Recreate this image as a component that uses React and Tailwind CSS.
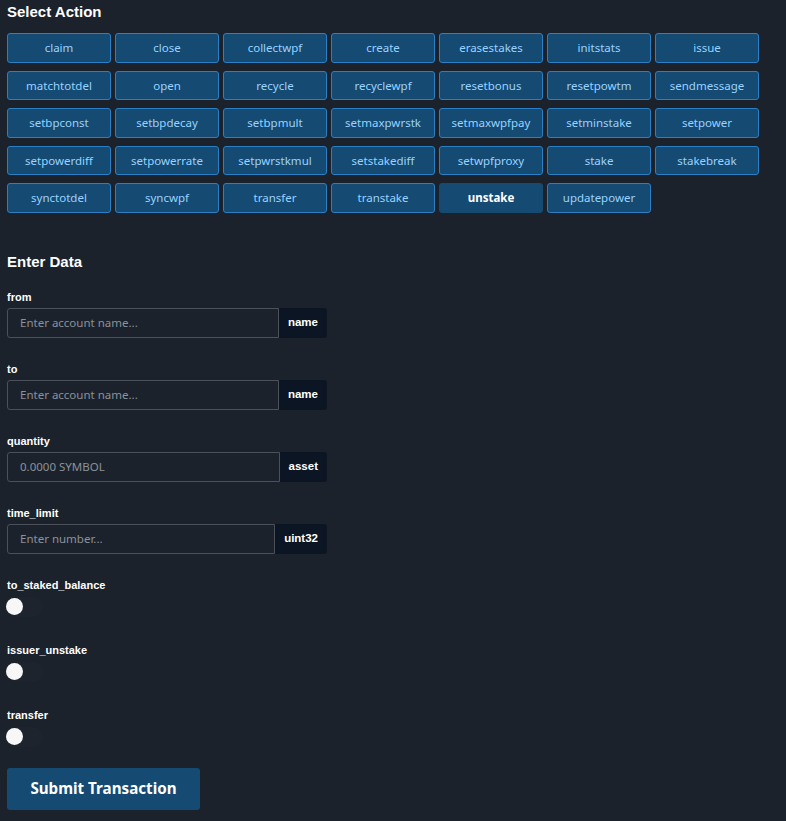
import { useState } from 'react';

const actions = [
  'claim', 'close', 'collectwpf', 'create', 'erasestakes', 'initstats', 'issue',
  'matchtotdel', 'open', 'recycle', 'recyclewpf', 'resetbonus', 'resetpowtm', 'sendmessage',
  'setbpconst', 'setbpdecay', 'setbpmult', 'setmaxpwrstk', 'setmaxwpfpay', 'setminstake', 'setpower',
  'setpowerdiff', 'setpowerrate', 'setpwrstkmul', 'setstakediff', 'setwpfproxy', 'stake', 'stakebreak',
  'synctotdel', 'syncwpf', 'transfer', 'transtake', 'unstake', 'updatepower',
];

const fields = [
  { name: 'from', type: 'name', placeholder: 'Enter account name...' },
  { name: 'to', type: 'name', placeholder: 'Enter account name...' },
  { name: 'quantity', type: 'asset', placeholder: '0.0000 SYMBOL' },
  { name: 'time_limit', type: 'uint32', placeholder: 'Enter number...' },
];

const toggles = ['to_staked_balance', 'issuer_unstake', 'transfer'];

const Toggle = ({ on, onClick }) => (
  <button
    onClick={onClick}
    className="relative block w-[36px] h-[20px] rounded-full bg-[#1d242d]"
  >
    <span
      className={`absolute top-[1px] w-[17px] h-[17px] rounded-full bg-[#f7f7f7] ${on ? 'left-[18px]' : 'left-[-1px]'}`}
    />
  </button>
);

export default function App() {
  const [selected, setSelected] = useState('unstake');
  const [flags, setFlags] = useState({});

  return (
    <div className="min-h-[821px] bg-[#1b222c] px-[7px] pt-[2px] pb-[10px] font-['Noto_Sans',sans-serif]">
      <h2 className="font-['Liberation_Sans',Arial,sans-serif] font-bold text-[15px] leading-[20px] text-white">
        Select Action
      </h2>

      {/* Action buttons */}
      <div className="grid grid-cols-[repeat(7,104px)] gap-x-[4px] gap-y-[8px] mt-[11px]">
        {actions.map((a) => (
          <button
            key={a}
            onClick={() => setSelected(a)}
            className={`h-[29.5px] rounded-[3px] bg-[#154a72] text-[11.5px] leading-none ${
              selected === a
                ? 'border border-[#154a72] text-white font-bold'
                : 'border border-[#2b7fc4] text-[#9ad2ff]'
            }`}
          >
            {a}
          </button>
        ))}
      </div>

      <h2 className="mt-[39px] font-['Liberation_Sans',Arial,sans-serif] font-bold text-[15px] leading-[20px] text-white">
        Enter Data
      </h2>

      {/* Data fields */}
      <div className="mt-[18px] w-[320px]">
        {fields.map((f) => (
          <div key={f.name} className="mb-[24px]">
            <label className="block mb-[3px] font-['Liberation_Sans',Arial,sans-serif] font-bold text-[11px] leading-[15px] text-white">
              {f.name}
            </label>
            <div className="flex h-[30px]">
              <input
                placeholder={f.placeholder}
                className="flex-1 min-w-0 bg-transparent border border-[#4b5059] rounded-l-[3px] px-[12px] text-[11.5px] text-white placeholder:text-[#8b9199] outline-none"
              />
              <span className="flex items-center px-[9px] bg-[#0b1523] rounded-r-[3px] font-['Liberation_Sans',Arial,sans-serif] font-bold text-[11.5px] text-white">
                {f.type}
              </span>
            </div>
          </div>
        ))}

        {toggles.map((t) => (
          <div key={t} className="mb-[26px]">
            <label className="block mb-[4px] font-['Liberation_Sans',Arial,sans-serif] font-bold text-[11px] leading-[15px] text-white">
              {t}
            </label>
            <Toggle on={!!flags[t]} onClick={() => setFlags({ ...flags, [t]: !flags[t] })} />
          </div>
        ))}
      </div>

      <button className="mt-[-5px] w-[193px] h-[42px] rounded-[3px] bg-[#154a72] text-white font-bold text-[15.2px]">
        Submit Transaction
      </button>
    </div>
  );
}
